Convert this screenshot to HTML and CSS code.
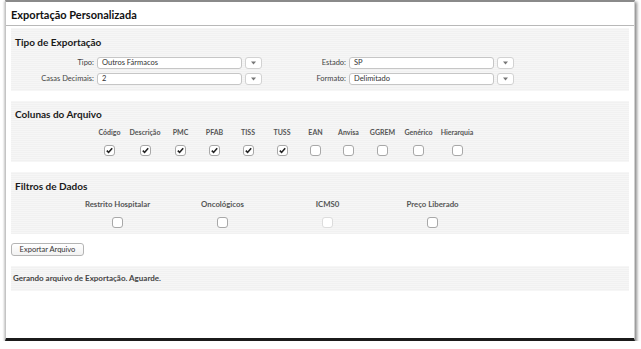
FILE: index.html
```html
<!DOCTYPE html>
<html lang="pt-BR">
<head>
    <meta charset="UTF-8">
    <title>Exportação Personalizada</title>
    <link rel="stylesheet" href="styles.css">
</head>
<body>
    <div class="window">
        <div class="title-bar">Exportação Personalizada</div>
        <div class="content">
            <div class="section section-tipo">
                <h2>Tipo de Exportação</h2>
                <div class="form-grid">
                    <label>Tipo:</label>
                    <div class="field">Outros Fármacos</div>
                    <div class="drop"><svg width="5" height="4" viewBox="0 0 5 4"><path d="M0 0.5h5L2.5 3.5z" fill="#777"/></svg></div>
                    <label>Estado:</label>
                    <div class="field">SP</div>
                    <div class="drop"><svg width="5" height="4" viewBox="0 0 5 4"><path d="M0 0.5h5L2.5 3.5z" fill="#777"/></svg></div>

                    <label>Casas Decimais:</label>
                    <div class="field">2</div>
                    <div class="drop"><svg width="5" height="4" viewBox="0 0 5 4"><path d="M0 0.5h5L2.5 3.5z" fill="#777"/></svg></div>
                    <label>Formato:</label>
                    <div class="field">Delimitado</div>
                    <div class="drop"><svg width="5" height="4" viewBox="0 0 5 4"><path d="M0 0.5h5L2.5 3.5z" fill="#777"/></svg></div>
                </div>
            </div>

            <div class="section section-colunas">
                <h2>Colunas do Arquivo</h2>
                <div class="check-grid colunas"></div>
            </div>

            <div class="section section-filtros">
                <h2>Filtros de Dados</h2>
                <div class="check-grid filtros"></div>
            </div>

            <button class="export-button">Exportar Arquivo</button>

            <div class="status">Gerando arquivo de Exportação. Aguarde.</div>
        </div>
    </div>
    <script>
        const colunas = [
            { label: 'Código', checked: true },
            { label: 'Descrição', checked: true },
            { label: 'PMC', checked: true },
            { label: 'PFAB', checked: true },
            { label: 'TISS', checked: true },
            { label: 'TUSS', checked: true },
            { label: 'EAN' },
            { label: 'Anvisa' },
            { label: 'GGREM' },
            { label: 'Genérico' },
            { label: 'Hierarquia' }
        ];
        const filtros = [
            { label: 'Restrito Hospitalar' },
            { label: 'Oncológicos' },
            { label: 'ICMS0', disabled: true },
            { label: 'Preço Liberado' }
        ];

        const checkSvg = '<svg width="9" height="9" viewBox="0 0 9 9"><path d="M1.8 4.6 L3.6 6.4 L7.2 2.2" fill="none" stroke="#222" stroke-width="1.6"/></svg>';

        function fillGrid(selector, items) {
            const grid = document.querySelector(selector);
            // one column per option: label on top, box below
            items.forEach(function(item) {
                const cell = document.createElement('div');
                cell.className = 'check-cell';
                let cls = 'box';
                if (item.checked) cls += ' checked';
                if (item.disabled) cls += ' disabled';
                cell.innerHTML = '<span class="check-label">' + item.label + '</span>' +
                    '<span class="' + cls + '">' + (item.checked ? checkSvg : '') + '</span>';
                grid.appendChild(cell);
            });
        }

        fillGrid('.colunas', colunas);
        fillGrid('.filtros', filtros);
    </script>
</body>
</html>
```

FILE: styles.css
```css
body {
    margin: 0;
    padding: 0;
    background: #fff;
    font-family: Lato, "Open Sans", sans-serif;
    color: #333;
}
.window {
    margin-left: 5px;
    width: 630px;
    height: 341px;
    box-sizing: border-box;
    border-top: 2px solid #8a8a8a;
    border-left: 1px solid #c4c4c4;
    border-right: 1px solid #d0d0d0;
    border-bottom: 3px solid #1b1b1b;
    box-shadow: 2px 2px 3px rgba(0, 0, 0, 0.45), -1px 1px 2px rgba(0, 0, 0, 0.2);
    background: #fff;
}
.title-bar {
    height: 24px;
    padding: 2px 0 0 5px;
    box-sizing: border-box;
    line-height: 22px;
    border-bottom: 1px solid #b8b8b8;
    font-size: 11px;
    font-weight: bold;
    color: #111;
}
.content {
    padding: 2px 5px 0 5px;
}
.section {
    background: repeating-linear-gradient(#f6f6f6 0, #f6f6f6 1px, #f1f1f1 1px, #f1f1f1 2px);
    margin-bottom: 10px;
}
.section h2 {
    margin: 0;
    font-size: 10px;
    line-height: 12px;
    font-weight: bold;
    color: #1a1a1a;
    padding-left: 4px;
}
.section-tipo {
    height: 63px;
    padding-top: 8px;
    box-sizing: border-box;
}
.section-colunas {
    height: 61px;
    padding-top: 7px;
    box-sizing: border-box;
}
.section-filtros {
    height: 62px;
    padding-top: 8px;
    box-sizing: border-box;
}
.form-grid {
    display: grid;
    grid-template-columns: 86px 145px 20px 87px 145px 20px;
    row-gap: 4px;
    margin-top: 9px;
}
.form-grid label {
    font-size: 7.5px;
    line-height: 12px;
    text-align: right;
    padding-right: 3px;
    color: #444;
}
.field {
    height: 12px;
    box-sizing: border-box;
    border: 1px solid #c6c6c6;
    border-radius: 3px;
    background: #fff;
    font-size: 7.5px;
    line-height: 10px;
    padding-left: 4px;
    color: #333;
}
.drop {
    margin-left: 3px;
    height: 12px;
    box-sizing: border-box;
    border: 1px solid #d2d2d2;
    border-radius: 3px;
    background: #fff;
    display: flex;
    align-items: center;
    justify-content: center;
}
.check-grid {
    display: grid;
    margin-top: 7px;
}
.colunas {
    grid-template-columns: 35px 36px 35px 33px 34px 34px 33px 33px 35px 37px 40px;
    padding-left: 81px;
}
.filtros {
    grid-template-columns: repeat(4, 105px);
    padding-left: 54px;
}
.check-cell {
    display: flex;
    flex-direction: column;
    align-items: center;
}
.check-label {
    font-size: 7px;
    line-height: 10px;
    font-weight: bold;
    color: #555;
    white-space: nowrap;
}
.filtros .check-label {
    font-size: 7.8px;
}
.box {
    margin-top: 8px;
    width: 11px;
    height: 11px;
    box-sizing: border-box;
    border: 1px solid #a8a8a8;
    border-radius: 3px;
    background: #fff;
    display: flex;
    align-items: center;
    justify-content: center;
}
.box.disabled {
    border-color: #dcdcdc;
}
.export-button {
    display: block;
    width: 73px;
    height: 13px;
    margin: -1px 0 10px 0;
    padding: 0;
    border: 1px solid #b4b4b4;
    border-radius: 3px;
    background: linear-gradient(#fff, #f2f2f2);
    font-family: Lato, "Open Sans", sans-serif;
    font-size: 7.5px;
    line-height: 11px;
    color: #333;
}
.status {
    height: 25px;
    line-height: 25px;
    padding-left: 2px;
    background: repeating-linear-gradient(#f6f6f6 0, #f6f6f6 1px, #f1f1f1 1px, #f1f1f1 2px);
    font-size: 8px;
    font-weight: bold;
    color: #444;
}
```
